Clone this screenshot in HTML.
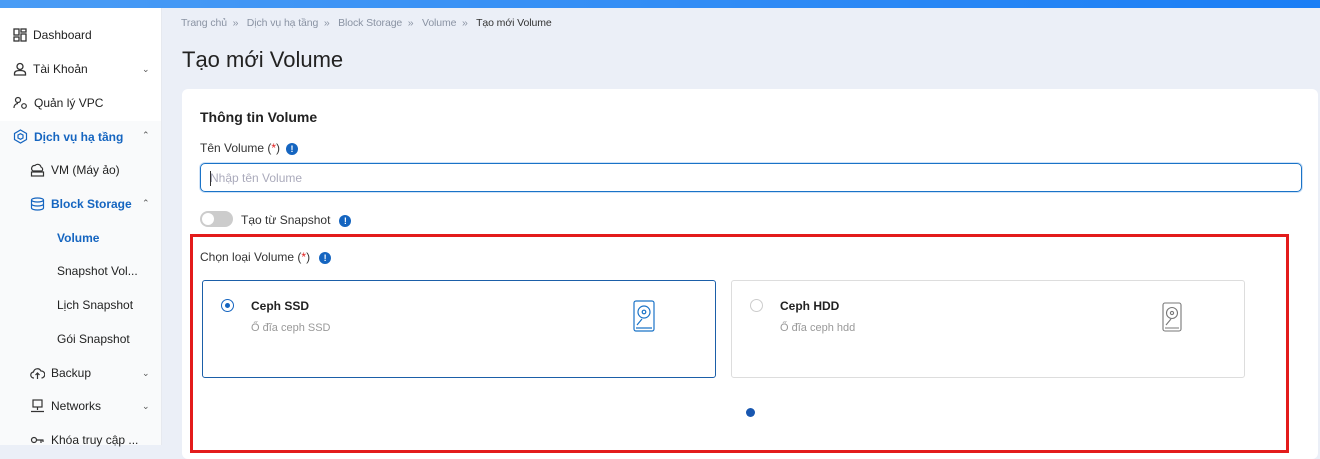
<!DOCTYPE html>
<html><head><meta charset="utf-8"><style>
*{box-sizing:border-box;margin:0;padding:0}
body{width:1320px;height:453px;overflow:hidden;font-family:"Liberation Sans","Noto Sans CJK SC",sans-serif;background:#ebeff7;position:relative;color:#222}
.top{position:absolute;left:0;top:0;width:1320px;height:8px;background:linear-gradient(90deg,#4a9cf5,#1a7ef5)}
.side{position:absolute;left:0;top:8px;width:162px;height:437px;background:#fff;border-right:1px solid #e6e9ef}
.side .grp{position:absolute;left:0;top:113px;width:161px;height:324px;background:#f9fafb}
.it{position:absolute;font-size:12px;color:#222;display:flex;align-items:center}
.it svg{margin-right:6px}
.chev{position:absolute;left:142px;font-size:9px;color:#555}
.blue{color:#1565c0;font-weight:bold}
.bc{position:absolute;left:181px;top:17px;font-size:10.5px;color:#8a93a3;letter-spacing:-0.1px}
.bc b{font-weight:normal;color:#333}
h1{position:absolute;left:182px;top:47px;font-size:22px;font-weight:normal;color:#222}
.card{position:absolute;left:182px;top:89px;width:1136px;height:370px;background:#fff;border-radius:6px}
.lbl{position:absolute;font-size:12px;color:#333}
.req{color:#e02020}
.info{display:inline-block;width:12px;height:12px;border-radius:50%;background:#1565c0;color:#fff;font-size:9px;font-weight:bold;text-align:center;line-height:12px;vertical-align:middle;margin-left:6px}
.input{position:absolute;left:200px;top:163px;width:1102px;height:29px;border:1px solid #1a73c7;border-radius:5px;box-shadow:0 0 0 1px #cfe2f7;font-size:12px;color:#aab;padding:7px 9px}
.input i{position:absolute;left:9px;top:7px;width:1px;height:15px;background:#333}
.tog{position:absolute;left:200px;top:211px;width:33px;height:16px;border-radius:8px;background:#ccc}
.tog:after{content:"";position:absolute;left:2px;top:2px;width:12px;height:12px;border-radius:50%;background:#fff}
.red{position:absolute;left:190px;top:234px;width:1099px;height:219px;border:3px solid #e31b1b}
.opt{position:absolute;top:280px;width:514px;height:98px;border-radius:3px;background:#fff}
.opt .t{position:absolute;left:48px;top:18px;font-size:12px;font-weight:bold;color:#222}
.opt .d{position:absolute;left:48px;top:41px;font-size:11px;color:#999}
.rad{position:absolute;left:18px;top:18px;width:13px;height:13px;border-radius:50%;border:1px solid #ccc}
.dot{position:absolute;left:746px;top:408px;width:9px;height:9px;border-radius:50%;background:#1857b0}
</style></head><body>
<div class="top"></div>
<div class="side"><div class="grp"></div></div>
<div class="it" style="left:13px;top:28px"><svg width="14" height="14" viewBox="0 0 14 14" fill="none" stroke="#333" stroke-width="1.3"><rect x="1" y="1" width="5" height="6"/><rect x="8" y="1" width="5" height="3"/><rect x="1" y="9" width="5" height="4"/><rect x="8" y="6" width="5" height="7"/></svg>Dashboard</div>
<div class="it" style="left:13px;top:62px"><svg width="14" height="14" viewBox="0 0 14 14" fill="none" stroke="#333" stroke-width="1.3"><circle cx="7" cy="4.5" r="3"/><path d="M1.5 13v-1.5c0-2 2-3 5.5-3s5.5 1 5.5 3V13z"/></svg>Tài Khoản</div><div class="chev" style="top:64px">⌄</div>
<div class="it" style="left:13px;top:96px"><svg width="15" height="14" viewBox="0 0 15 14" fill="none" stroke="#333" stroke-width="1.2"><circle cx="5" cy="4" r="2.5"/><path d="M1 12c0-3 2-4.5 4-4.5"/><circle cx="11" cy="10" r="2.3"/></svg>Quản lý VPC</div>
<div class="it blue" style="left:13px;top:129px"><svg width="15" height="15" viewBox="0 0 15 15" fill="none" stroke="#1565c0" stroke-width="1.2"><path d="M7.5 1l6 3.5v6l-6 3.5-6-3.5v-6z"/><path d="M5 6l2.5-1.3L10 6v3l-2.5 1.3L5 9z"/></svg>Dịch vụ hạ tầng</div><div class="chev" style="top:130px">⌃</div>
<div class="it" style="left:30px;top:163px"><svg width="15" height="14" viewBox="0 0 15 14" fill="none" stroke="#333" stroke-width="1.2"><path d="M3 8a3 3 0 0 1 2-5.5 3.5 3.5 0 0 1 6 1.5 2.5 2.5 0 0 1 1 4z"/><rect x="1.5" y="9" width="12" height="4"/></svg>VM (Máy ảo)</div>
<div class="it blue" style="left:30px;top:197px"><svg width="15" height="14" viewBox="0 0 15 14" fill="none" stroke="#1565c0" stroke-width="1.2"><ellipse cx="7.5" cy="3" rx="6" ry="2"/><path d="M1.5 3v8c0 1.1 2.7 2 6 2s6-.9 6-2V3M1.5 7c0 1.1 2.7 2 6 2s6-.9 6-2"/></svg>Block Storage</div><div class="chev" style="top:198px">⌃</div>
<div class="it blue" style="left:57px;top:231px">Volume</div>
<div class="it" style="left:57px;top:264px">Snapshot Vol...</div>
<div class="it" style="left:57px;top:298px">Lịch Snapshot</div>
<div class="it" style="left:57px;top:332px">Gói Snapshot</div>
<div class="it" style="left:30px;top:366px"><svg width="15" height="14" viewBox="0 0 15 14" fill="none" stroke="#333" stroke-width="1.2"><path d="M4 12a3 3 0 0 1-.5-6 4 4 0 0 1 7.5-1 3 3 0 0 1 .5 7"/><path d="M7.5 13V7M5.5 9l2-2 2 2"/></svg>Backup</div><div class="chev" style="top:368px">⌄</div>
<div class="it" style="left:30px;top:399px"><svg width="15" height="14" viewBox="0 0 15 14" fill="none" stroke="#333" stroke-width="1.2"><rect x="3" y="1" width="9" height="7"/><path d="M7.5 8v3M1 12.5h13"/></svg>Networks</div><div class="chev" style="top:401px">⌄</div>
<div class="it" style="left:30px;top:433px"><svg width="15" height="14" viewBox="0 0 15 14" fill="none" stroke="#333" stroke-width="1.2"><circle cx="4" cy="7" r="2.5"/><path d="M6.5 7h7M11 7v3M13 7v2"/></svg>Khóa truy cập ...</div>

<div class="bc">Trang chủ &nbsp;»&nbsp;&nbsp; Dịch vụ hạ tầng &nbsp;»&nbsp;&nbsp; Block Storage &nbsp;»&nbsp;&nbsp; Volume &nbsp;»&nbsp;&nbsp; <b>Tạo mới Volume</b></div>
<h1>Tạo mới Volume</h1>
<div class="card"></div>
<div class="lbl" style="left:200px;top:109px;font-size:14px;font-weight:bold;color:#222">Thông tin Volume</div>
<div class="lbl" style="left:200px;top:141px">Tên Volume (<span class="req">*</span>)<span class="info">!</span></div>
<div class="input"><i></i>Nhập tên Volume</div>
<div class="tog"></div>
<div class="lbl" style="left:241px;top:213px">Tạo từ Snapshot<span class="info" style="margin-left:9px">!</span></div>
<div class="red"></div>
<div class="lbl" style="left:200px;top:250px">Chọn loại Volume (<span class="req">*</span>)<span class="info" style="margin-left:9px">!</span></div>
<div class="opt" style="left:202px;border:1px solid #1b5fa8">
 <div class="rad" style="border-color:#1565c0"><div style="position:absolute;left:3px;top:3px;width:5px;height:5px;border-radius:50%;background:#1565c0"></div></div>
 <div class="t">Ceph SSD</div><div class="d">Ổ đĩa ceph SSD</div>
 <svg style="position:absolute;left:430px;top:19px" width="22" height="32" viewBox="0 0 22 32" fill="none" stroke="#1a73c7" stroke-width="1.2"><rect x="1" y="1" width="20" height="30" rx="2"/><circle cx="11" cy="12" r="6"/><circle cx="11" cy="12" r="1.8"/><path d="M4 25l5-6M3 28h16"/></svg>
</div>
<div class="opt" style="left:731px;border:1px solid #ddd">
 <div class="rad" style="left:18px"></div>
 <div class="t">Ceph HDD</div><div class="d">Ổ đĩa ceph hdd</div>
 <svg style="position:absolute;left:430px;top:21px" width="20" height="30" viewBox="0 0 20 30" fill="none" stroke="#777" stroke-width="1.1"><rect x="1" y="1" width="18" height="28" rx="2"/><circle cx="10" cy="11" r="5.5"/><circle cx="10" cy="11" r="1.6"/><path d="M4 23l5-6M3 26h14"/></svg>
</div>
<div class="dot"></div>
</body></html>
